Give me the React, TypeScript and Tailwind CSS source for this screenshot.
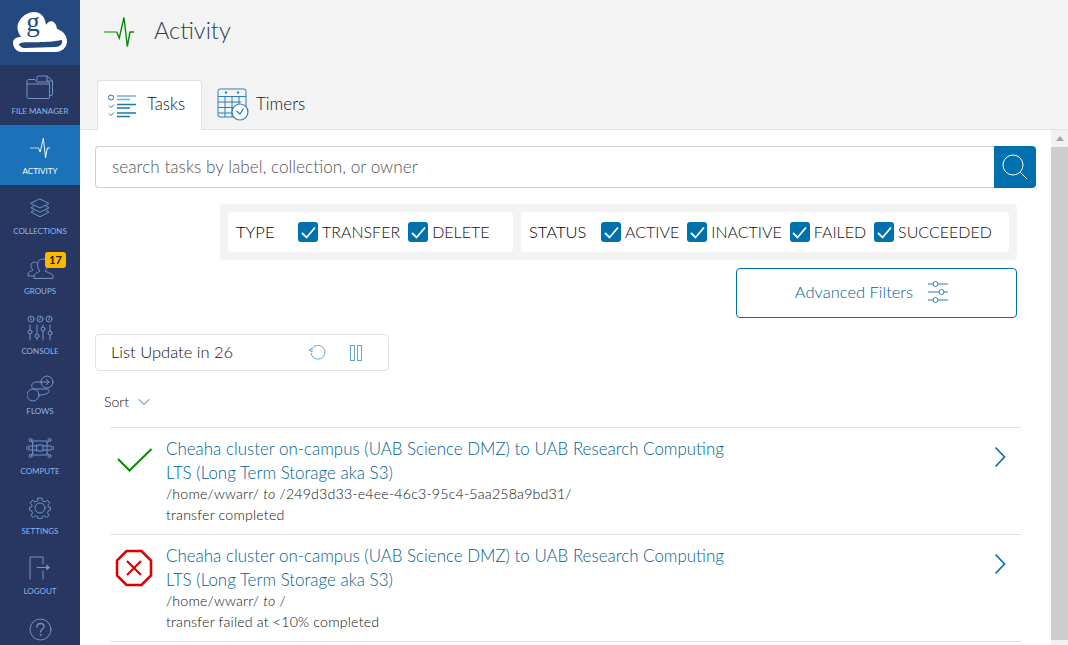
import React from 'react';
import { ChevronDown } from 'lucide-react';

const FONT = "font-['Lato','Open_Sans',sans-serif]";

const GlobusLogo = () => (
  <svg width="54" height="46" viewBox="0 -6 54 46">
    <path
      d="M9 40 C3 40 0 35 0 31 C0 27 3 25 8 25 C4 19 3 13 7 8 C10 3 16 0 21 0 C28 0 32 5 33 13 C36 7 43 8 44 17 C45 17 46 17 46 18 C50 19 54 24 54 29 C54 36 48 40 43 40 Z"
      fill="#fff"
    />
    <path d="M6 32 C10 29 20 31 28 30 C36 30 44 29 49 28 C50 32 47 35 42 35 L12 36 C9 36 6 34 6 32 Z" fill="#23497f" />
    <text x="20" y="19" textAnchor="middle" fontFamily="'Liberation Serif', serif" fontSize="27" fill="#23497f">g</text>
  </svg>
);

const stroke = { fill: 'none', stroke: 'currentColor', strokeWidth: 1, strokeLinecap: 'round', strokeLinejoin: 'round' } as const;

const FolderIcon = () => (
  <svg width="28" height="26" viewBox="0 0 28 26" {...stroke}>
    <path d="M11 5 V2.500 Q11 1 12.500 1 H21 L26.500 6 V19 Q26.500 20.500 25 20.500 H24" />
    <path d="M21 1 V6 H26.500" />
    <path d="M1 6 Q1 4.500 2.500 4.500 H9 L11 7 H22 Q23.500 7 23.500 8.500 V22 Q23.500 23.500 22 23.500 H2.500 Q1 23.500 1 22 Z" />
    <path d="M1 9 H23.500" />
  </svg>
);

const PulseIcon = ({ w = 20, h = 22, color = 'currentColor' }: { w?: number; h?: number; color?: string }) => (
  <svg width={w} height={h} viewBox="0 0 30 30" fill="none" stroke={color} strokeWidth="1.400">
    <path d="M0 15 H12.700" opacity="0.7" />
    <path d="M12.700 15 L15.300 21 L20 0.500 L23.300 29.500 L26 15 H30" />
  </svg>
);

const LayersIcon = () => (
  <svg width="20" height="20" viewBox="0 0 20 20" {...stroke}>
    <path d="M10 1 L19 5.500 L10 10 L1 5.500 Z" />
    <path d="M4 8 L1 9.800 L10 14.300 L19 9.800 L16 8" />
    <path d="M4 12.300 L1 14 L10 18.800 L19 14 L16 12.300" />
  </svg>
);

const GroupsIcon = () => (
  <svg width="27" height="21" viewBox="0 0 27 21" {...stroke}>
    <path d="M7 18 H1 V16 C1 14 4 13 6 12 C4.500 10.500 4 9 4 7.500 C4 5.500 5.500 4 7.500 4 C8.500 4 9.500 4.300 10 5" />
    <path d="M7 20 V18 C7 15.500 11 14.500 13 13 C11 11 10.500 9 10.500 6.500 C10.500 3 13 1 15.500 1 C18.500 1 20.500 3 20.500 6.500 C20.500 9 20 11 18 13 C20 14.500 26 15.500 26 18 V20 Z" />
  </svg>
);

const ConsoleIcon = () => (
  <svg width="26" height="26" viewBox="0 0 26 26" {...stroke}>
    <circle cx="4" cy="4" r="3" />
    <circle cx="13" cy="4" r="3" />
    <circle cx="22" cy="4" r="3" />
    <path d="M3.500 2.500 L4.500 5 M13.500 2.500 L12.500 5 M22.500 2.500 L21.500 5" />
    <path d="M3 10 V15 M3 19 V25 M10 10 V19 M10 23 V25 M16 10 V12 M16 16 V25 M23 10 V16 M23 20 V25" />
    <circle cx="3" cy="17" r="2" />
    <circle cx="10" cy="21" r="2" />
    <circle cx="16" cy="14" r="2" />
    <circle cx="23" cy="18" r="2" />
  </svg>
);

const FlowsIcon = () => (
  <svg width="27" height="27" viewBox="0 0 27 27" {...stroke}>
    <circle cx="20" cy="7" r="6" />
    <circle cx="6" cy="20" r="6" />
    <path d="M14 7 H9 C4 7 3 14 8 14 H19 C24 14 24 20 12 20" />
    <path d="M14 7 H22 M19.500 4.500 L22 7 L19.500 9.500" />
  </svg>
);

const ComputeIcon = () => (
  <svg width="28" height="20" viewBox="0 0 28 20" {...stroke}>
    <rect x="7" y="3" width="14" height="14" />
    <rect x="11" y="7" width="6" height="6" />
    <path d="M3 8 H11 M17 8 H25 M3 12 H11 M17 12 H25 M7 5 L5 3 M21 5 L23 3 M7 15 L5 17 M21 15 L23 17" />
    <circle cx="4.500" cy="2" r="1.500" />
    <circle cx="23.500" cy="2" r="1.500" />
    <circle cx="4.500" cy="18" r="1.500" />
    <circle cx="23.500" cy="18" r="1.500" />
    <circle cx="1.500" cy="10" r="1.500" />
    <circle cx="26.500" cy="10" r="1.500" />
  </svg>
);

const GearIcon = () => (
  <svg width="22" height="22" viewBox="0 0 22 22" {...stroke}>
    <circle cx="11" cy="11" r="5" />
    <path d="M9 1 H13 L13.500 4 L16 5 L18.500 3.200 L20.800 6 L18.800 8 L19.500 10 L21.500 10.500 V13 L19.300 13.800 L18.500 16 L20 18.500 L17.500 20.500 L15.500 18.800 L13.500 19.500 L13 21.500 H9 L8.500 19.500 L6.500 18.800 L4.500 20.500 L2 18.500 L3.500 16 L2.700 13.800 L0.500 13 V10.500 L2.500 10 L3.200 8 L1.200 6 L3.500 3.200 L6 5 L8.500 4 Z" />
  </svg>
);

const LogoutIcon = () => (
  <svg width="22" height="24" viewBox="0 0 22 24" {...stroke}>
    <path d="M1 23 V1 H14 V8 M14 15 V23" />
    <path d="M8 11.500 H20" />
    <path d="M18 9.500 L20.500 11.500 L18 13.500 Z" fill="currentColor" />
  </svg>
);

const NAV = [
  { label: 'FILE MANAGER', icon: <FolderIcon /> },
  { label: 'ACTIVITY', icon: <PulseIcon />, active: true },
  { label: 'COLLECTIONS', icon: <LayersIcon /> },
  { label: 'GROUPS', icon: <GroupsIcon />, badge: '17' },
  { label: 'CONSOLE', icon: <ConsoleIcon /> },
  { label: 'FLOWS', icon: <FlowsIcon /> },
  { label: 'COMPUTE', icon: <ComputeIcon /> },
  { label: 'SETTINGS', icon: <GearIcon /> },
  { label: 'LOGOUT', icon: <LogoutIcon /> },
];

const Sidebar = () => (
  <aside className="w-[80px] shrink-0 bg-[#283762] flex flex-col">
    <div className="h-[65px] shrink-0 bg-[#23497f] flex items-start justify-center pt-[6px]">
      <GlobusLogo />
    </div>
    {NAV.map((item) => (
      <div
        key={item.label}
        className={`relative h-[60px] shrink-0 flex flex-col items-center justify-end pb-[9px] gap-[4px] ${
          item.active ? 'bg-[#1b72b8] text-white' : 'text-[#7392c6]'
        }`}
      >
        <div className="flex items-center justify-center h-[28px]">{item.icon}</div>
        <span className={`text-[8px] leading-[10px] ${item.active ? 'text-white' : 'text-[#8db4ee]'}`}>{item.label}</span>
        {item.badge && (
          <span className="absolute left-[45px] top-[7px] w-[21px] h-[16px] rounded-[3px] bg-[#fdb900] text-[#222] text-[11px] leading-[16px] font-bold text-center">
            {item.badge}
          </span>
        )}
      </div>
    ))}
    <div className="flex justify-center pt-[13px] text-[#7392c6]">
      <svg width="23" height="23" viewBox="0 0 23 23" {...stroke}>
        <circle cx="11.500" cy="11.500" r="10.500" />
        <path d="M8 9 C8 6.500 9.500 5.500 11.500 5.500 C13.500 5.500 15 6.800 15 8.500 C15 11 11.500 11 11.500 14" strokeWidth="1.300" />
        <circle cx="11.500" cy="17" r="0.500" />
      </svg>
    </div>
  </aside>
);

const TasksIcon = () => (
  <svg width="28" height="24" viewBox="0 0 28 24" fill="none" stroke="#1b76b0">
    <circle cx="3" cy="3.500" r="2.500" strokeWidth="1" />
    <path d="M1 11.500 L3 13.500 L6 10.500 M1 19.500 L3 21.500 L6 18.500" strokeWidth="1" />
    <path d="M9 2 H28 M9 5.500 H22" strokeWidth="1.500" opacity="0.6" />
    <path d="M9 10.500 H28 M9 14 H22 M9 19 H28 M9 22.500 H22" strokeWidth="1.500" />
  </svg>
);

const TimersIcon = () => (
  <svg width="32" height="33" viewBox="0 0 32 33" fill="none" stroke="#2a7fb5" strokeWidth="1">
    <rect x="1" y="1" width="28" height="28" rx="2" />
    <path d="M1 8.500 H29 M1 14 H24 M1 19.500 H20 M1 25 H15 M8 8.500 V29 M15 8.500 V29 M22 8.500 V20" />
    <circle cx="9" cy="4.500" r="0.800" fill="#2a7fb5" />
    <circle cx="21" cy="4.500" r="0.800" fill="#2a7fb5" />
    <circle cx="23" cy="24" r="8" fill="#fff" strokeWidth="1.200" />
    <path d="M19.500 23 L23 26 L26.500 20.500" strokeWidth="1.200" />
  </svg>
);

const Check = ({ label }: { label: string }) => (
  <label className="flex items-center gap-[4px]">
    <span className="w-[20px] h-[20px] rounded-[3px] bg-[#0071ae] flex items-center justify-center">
      <svg width="15" height="13" viewBox="0 0 15 13" fill="none" stroke="#fff" strokeWidth="1.800">
        <path d="M1 7 L5.500 11.500 L14 1.500" />
      </svg>
    </span>
    <span className="text-[16px] font-light text-[#111] leading-[20px]">{label}</span>
  </label>
);

const SlidersIcon = () => (
  <svg width="22" height="22" viewBox="0 0 22 22" fill="none" stroke="#2a7fb5" strokeWidth="1">
    <path d="M1 3 H6 M11 3 H21 M1 11 H12 M17 11 H21 M1 19 H6 M11 19 H21" />
    <circle cx="8.500" cy="3" r="2.500" />
    <circle cx="14.500" cy="11" r="2.500" />
    <circle cx="8.500" cy="19" r="2.500" />
  </svg>
);

const TASKS = [
  {
    status: 'ok',
    dest: '/249d3d33-e4ee-46c3-95c4-5aa258a9bd31/',
    note: 'transfer completed',
  },
  {
    status: 'fail',
    dest: '/',
    note: 'transfer failed at <10% completed',
  },
];

const TaskRow = ({ status, dest, note }: { status: string; dest: string; note: string }) => (
  <div className="flex border-b border-[#e2e2ea] h-[107px]">
    <div className="w-[56px] shrink-0 pl-[6px] pt-[20px]">
      {status === 'ok' ? (
        <svg width="36" height="24" viewBox="0 0 36 24" fill="none" stroke="#0a8a0a" strokeWidth="2" className="ml-[1px]">
          <path d="M1 11 L12.500 22.500 L34.500 1" />
        </svg>
      ) : (
        <svg width="38" height="38" viewBox="0 0 38 38" fill="none" className="-mt-[6px] -ml-[1px]">
          <path d="M11.500 2 H26.500 L36 11.500 V26.500 L26.500 36 H11.500 L2 26.500 V11.500 Z" stroke="#dc0000" strokeWidth="2.500" />
          <path d="M12 12 L26 26 M26 12 L12 26" stroke="#dc0000" strokeWidth="2.200" />
        </svg>
      )}
    </div>
    <div className="flex-1 pt-[9px]">
      <div className="text-[16.950px] leading-[24px] font-light text-[#005f96] w-[600px]">
        Cheaha cluster on-campus (UAB Science DMZ) to UAB Research Computing
        <br />
        LTS (Long Term Storage aka S3)
      </div>
      <div className="text-[14.200px] tracking-[0.18px] font-light leading-[22px] -mt-[2px] text-[#111]">
        /home/wwarr/ <em>to</em> {dest}
      </div>
      <div className="text-[14.200px] tracking-[0.18px] font-light leading-[22px] -mt-[1px] text-[#111]">{note}</div>
    </div>
    <div className="w-[33px] shrink-0 pt-[18px] pl-[6px]">
      <svg width="12" height="22" viewBox="0 0 12 22" fill="none" stroke="#0f75ae" strokeWidth="1.800">
        <path d="M1.500 1.500 L10.500 11 L1.500 20.500" />
      </svg>
    </div>
  </div>
);

export default function App() {
  return (
    <div className={`flex h-[645px] w-[1068px] overflow-hidden bg-white ${FONT}`}>
      <Sidebar />
      <main className="flex-1 flex flex-col min-w-0">
        <header className="bg-[#f3f3f3] h-[130px] shrink-0 flex flex-col">
          <div className="h-[80px] flex items-start pl-[24px] pt-[15px]">
            <div className="pt-[2px]">
              <PulseIcon w={30} h={30} color="#0a8a0a" />
            </div>
            <h1 className="ml-[20px] text-[23.500px] leading-[30px] font-light text-[#2b3f55]">Activity</h1>
          </div>
          <div className="flex pl-[17px] h-[50px] border-b border-[#dfe2e6]">
            <div className="w-[105px] h-[50px] bg-white border border-b-0 border-[#dfe2e6] rounded-t-[4px] flex items-center pl-[10px] gap-[11px]">
              <TasksIcon />
              <span className="text-[16.800px] font-light text-[#111] -mt-[4px]">Tasks</span>
            </div>
            <div className="flex items-center pl-[15px] gap-[7px] pb-[1px]">
              <TimersIcon />
              <span className="text-[17px] font-light text-[#111] -mt-[1px]">Timers</span>
            </div>
          </div>
        </header>

        <div className="flex-1 flex min-h-0">
          <div className="flex-1 min-w-0 pl-[15px] pr-[15px] pt-[16px]">
            <div className="flex h-[42px]">
              <div className="flex-1 border border-[#ccd0da] border-r-0 rounded-l-[4px] flex items-center pl-[16px] text-[17.200px] font-light text-[#555]">
                search tasks by label, collection, or owner
              </div>
              <div className="w-[42px] bg-[#0071ae] rounded-r-[4px] flex items-center justify-center">
                <svg width="26" height="26" viewBox="0 0 26 26" fill="none" stroke="#fff" strokeWidth="1">
                  <circle cx="11" cy="11" r="10" />
                  <path d="M18 18 L25 25" />
                </svg>
              </div>
            </div>

            <div className="ml-[125px] mr-[19px] mt-[16px] bg-[#f3f3f3] rounded-[4px] p-[8px] flex gap-[8px]">
              <div className="w-[285px] h-[40px] bg-white rounded-[4px] flex items-center pl-[8px]">
                <span className="w-[62px] text-[16.500px] font-light text-black">TYPE</span>
                <div className="flex gap-[8px]">
                  <Check label="TRANSFER" />
                  <Check label="DELETE" />
                </div>
              </div>
              <div className="flex-1 h-[40px] bg-white rounded-[4px] flex items-center pl-[8px]">
                <span className="w-[72px] text-[16.500px] font-light text-black">STATUS</span>
                <div className="flex gap-[8px]">
                  <Check label="ACTIVE" />
                  <Check label="INACTIVE" />
                  <Check label="FAILED" />
                  <Check label="SUCCEEDED" />
                </div>
              </div>
            </div>

            <div className="flex justify-end mr-[19px] mt-[8px]">
              <button className="w-[281px] h-[50px] border border-[#0071ae] rounded-[4px] flex items-center justify-center gap-[14px] pr-[9px] pb-[2px] text-[16.500px] font-light text-[#005f96]">
                Advanced Filters
                <SlidersIcon />
              </button>
            </div>

            <div className="mt-[16px] w-[294px] h-[37px] border border-[#dfe2e8] rounded-[4px] flex items-center pl-[15px] text-[16.500px] font-light text-[#111]">
              <span className="w-[197px]">List Update in 26</span>
              <svg width="18" height="16" viewBox="0 0 18 16" fill="none" stroke="#5fa9d4" strokeWidth="1">
                <path d="M4 3.500 A7 7 0 1 1 3 8" />
                <path d="M1 5 L4 7 V3.500 Z" />
              </svg>
              <svg width="12" height="16" viewBox="0 0 12 16" fill="none" stroke="#5fa9d4" strokeWidth="1" className="ml-[24px]">
                <rect x="0.500" y="0.500" width="4" height="15" />
                <rect x="7.500" y="0.500" width="4" height="15" />
              </svg>
            </div>

            <div className="mt-[21px] ml-[9px] flex items-center gap-[5px] text-[14px] font-light leading-[18px] text-[#111]">
              Sort
              <ChevronDown size={20} strokeWidth={1.200} color="#2a6fa8" />
            </div>

            <div className="ml-[15px] mr-[15px] mt-[15px] border-t border-[#e2e2ea]">
              {TASKS.map((t) => (
                <TaskRow key={t.status} {...t} />
              ))}
            </div>
          </div>

          <div className="w-[17px] shrink-0 bg-[#f1f1f1] flex flex-col">
            <div className="h-[17px] flex items-center justify-center">
              <svg width="8" height="5" viewBox="0 0 8 5" fill="#a3a3a3"><path d="M4 0 L8 5 H0 Z" /></svg>
            </div>
            <div className="h-[493px] bg-[#cdcdcd]" />
          </div>
        </div>
      </main>
    </div>
  );
}
